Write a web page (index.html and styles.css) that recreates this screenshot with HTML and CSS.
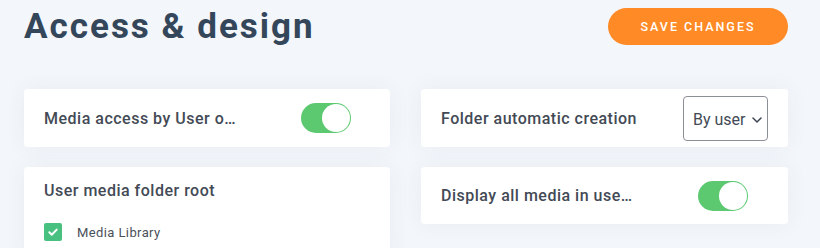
FILE: index.html
```html
<!DOCTYPE html>
<html lang="en">
<head>
<meta charset="utf-8">
<title>Access &amp; design</title>
<link rel="stylesheet" href="styles.css">
</head>
<body>
<div class="page">
  <header class="header">
    <h1 class="title">Access &amp; design</h1>
    <button class="save-btn">SAVE CHANGES</button>
  </header>
  <div class="grid">
    <div class="col">
      <div class="card row">
        <span class="label">Media access by User o…</span>
        <span class="toggle"><span class="knob"></span></span>
      </div>
      <div class="card block">
        <div class="block-title">User media folder root</div>
        <div class="check-row">
          <span class="checkbox">
            <svg width="12" height="12" viewBox="0 0 12 12"><path d="M2.3 6.3 L4.8 8.7 L9.7 3.6" fill="none" stroke="#fff" stroke-width="2" stroke-linecap="round" stroke-linejoin="round"/></svg>
          </span>
          <span class="check-label">Media Library</span>
        </div>
      </div>
    </div>
    <div class="col">
      <div class="card row row-select">
        <span class="label label-wide">Folder automatic creation</span>
        <span class="select">
          <span>By user</span>
          <svg width="10" height="6" viewBox="0 0 10 6"><path d="M1 1 L5 5 L9 1" fill="none" stroke="#3c4450" stroke-width="1.5" stroke-linecap="round" stroke-linejoin="round"/></svg>
        </span>
      </div>
      <div class="card row">
        <span class="label">Display all media in use…</span>
        <span class="toggle"><span class="knob"></span></span>
      </div>
    </div>
  </div>
</div>
</body>
</html>
```
FILE: styles.css
```css
* { box-sizing: border-box; }
html, body { margin: 0; padding: 0; }
body {
  background: #f3f6fa;
  font-family: Roboto, "Liberation Sans", sans-serif;
  color: #434a55;
}
.page {
  padding: 8px 32px 0 24px;
}
.header {
  display: flex;
  justify-content: space-between;
  align-items: center;
  height: 37px;
}
.title {
  margin: 0;
  font-size: 35px;
  line-height: 37px;
  font-weight: 700;
  letter-spacing: 2px;
  color: #34475a;
}
.save-btn {
  width: 180px;
  height: 37px;
  border: none;
  border-radius: 19px;
  background: #ff8a26;
  color: #fff;
  font-family: Roboto, "Liberation Sans", sans-serif;
  font-size: 12.5px;
  font-weight: 500;
  letter-spacing: 2px;
  padding: 0;
}
.grid {
  margin-top: 44px;
  display: grid;
  grid-template-columns: 366px 367px;
  column-gap: 31px;
}
.col {
  display: flex;
  flex-direction: column;
  gap: 20px;
}
.card {
  background: #fff;
  border-radius: 4px;
  box-shadow: 0 0 22px rgba(60, 80, 120, 0.06);
}
.row {
  height: 58px;
  display: flex;
  align-items: center;
  padding: 0 20px;
}
.row + .row { height: 57px; }
.label {
  width: 237px;
  font-size: 16px;
  font-weight: 500;
  letter-spacing: 0.5px;
  white-space: nowrap;
}
.label-wide { width: auto; flex: 1; }
.toggle {
  position: relative;
  margin-left: 20px;
  width: 50px;
  height: 30px;
  border-radius: 15px;
  background: #5cc971;
}
.knob {
  position: absolute;
  top: 1px;
  right: 1px;
  width: 28px;
  height: 28px;
  border-radius: 50%;
  background: #fff;
}
.select {
  width: 85px;
  height: 45px;
  border: 1px solid #8b9097;
  border-radius: 4px;
  display: flex;
  align-items: center;
  gap: 6px;
  padding: 2px 0 0 9px;
  font-size: 16px;
  color: #434a55;
}
.select svg { margin-top: 1px; }
.block {
  height: 90px;
  padding: 12px 20px;
}
.block-title {
  font-size: 16px;
  line-height: 24px;
  font-weight: 500;
  letter-spacing: 0.5px;
}
.check-row {
  margin-top: 20px;
  display: flex;
  align-items: center;
}
.checkbox {
  width: 18px;
  height: 18px;
  border-radius: 2px;
  background: #48c07f;
  display: flex;
  align-items: center;
  justify-content: center;
}
.check-label {
  margin-left: 15px;
  font-size: 13px;
  letter-spacing: 0.4px;
  color: #4a505a;
}
```
